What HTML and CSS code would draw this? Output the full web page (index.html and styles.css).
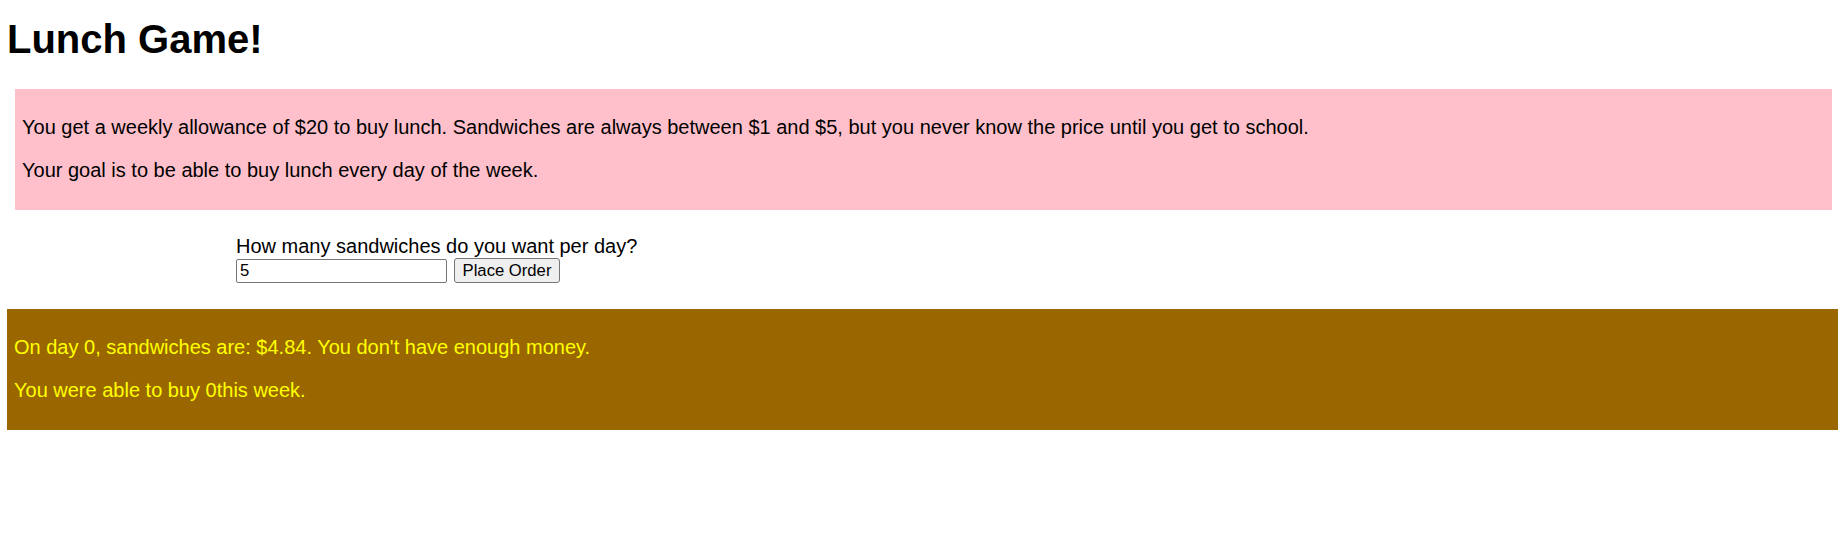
FILE: index.html
```html
<!DOCTYPE html>
<html lang="en">
<head>
<meta charset="utf-8">
<title>Lunch Game!</title>
<link rel="stylesheet" href="styles.css">
</head>
<body>
<div class="page">
  <h1 class="title">Lunch Game!</h1>
  <div class="intro">
    <p>You get a weekly allowance of $20 to buy lunch. Sandwiches are always between $1 and $5, but you never know the price until you get to school.</p>
    <p>Your goal is to be able to buy lunch every day of the week.</p>
  </div>
  <form class="order">
    <label class="order-label" for="qty">How many sandwiches do you want per day?</label>
    <div class="order-row">
      <input class="order-input" id="qty" type="text" value="5">
      <button class="order-button" type="button">Place Order</button>
    </div>
  </form>
  <div class="result">
    <p>On day 0, sandwiches are: $4.84. You don't have enough money.</p>
    <p>You were able to buy 0this week.</p>
  </div>
</div>
</body>
</html>
```
FILE: styles.css
```css
html, body {
  margin: 0;
  padding: 0;
  background: #ffffff;
}

body {
  font-family: "Liberation Sans", Arial, sans-serif;
  font-size: 20px;
  line-height: 23px;
  color: #000000;
}

.page {
  padding: 0 4px 0 7px;
}

.title {
  font-size: 40px;
  line-height: 46px;
  font-weight: bold;
  margin: 16px 0 27px 0;
}

.intro {
  background: #ffc0cb;
  margin: 0 6px 0 8px;
  padding: 7px 7px 8px;
}

.intro p,
.result p {
  margin: 20px 0;
}

.order {
  margin: 25px 0 26px 229px;
}

.order-label {
  display: block;
  height: 23px;
}

.order-row {
  display: flex;
  align-items: flex-end;
  gap: 7px;
}

.order-input {
  box-sizing: border-box;
  width: 211px;
  height: 24px;
  margin: 0;
  padding: 0 3px;
  border: 1px solid #767676;
  border-radius: 2px;
  font-family: "Liberation Sans", Arial, sans-serif;
  font-size: 16.67px;
  color: #000000;
  background: #ffffff;
}

.order-button {
  box-sizing: border-box;
  width: 106px;
  height: 25px;
  margin: 0;
  padding: 0;
  border: 1px solid #767676;
  border-radius: 3px;
  background: #efefef;
  font-family: "Liberation Sans", Arial, sans-serif;
  font-size: 16.67px;
  color: #000000;
}

.result {
  background: #996600;
  color: #ffff00;
  padding: 7px 7px 8px;
}
```
